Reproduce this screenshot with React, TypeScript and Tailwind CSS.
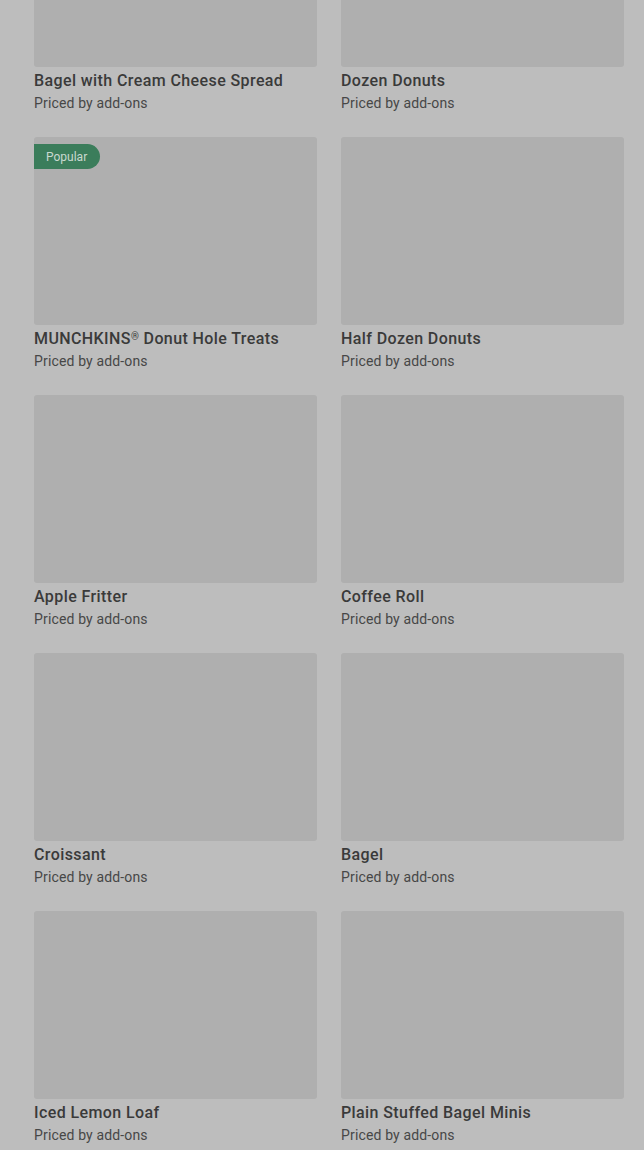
const items = [
  { name: "Bagel with Cream Cheese Spread" },
  { name: "Dozen Donuts" },
  { name: "MUNCHKINS® Donut Hole Treats", popular: true },
  { name: "Half Dozen Donuts" },
  { name: "Apple Fritter" },
  { name: "Coffee Roll" },
  { name: "Croissant" },
  { name: "Bagel" },
  { name: "Iced Lemon Loaf" },
  { name: "Plain Stuffed Bagel Minis" },
];

function Title({ name }: { name: string }) {
  // registered mark sits small and raised
  const parts = name.split("®");
  if (parts.length === 1) return <>{name}</>;
  return (
    <>
      {parts[0]}
      <span className="relative -top-[4px] align-baseline text-[10px] leading-none">®</span>
      {parts[1]}
    </>
  );
}

function ItemCard({ name, popular }: { name: string; popular?: boolean }) {
  return (
    <div className="flex flex-col">
      <div className="relative h-[188px] rounded-[3px] bg-[#afafaf]">
        {popular && (
          <span className="absolute left-0 top-[7px] flex h-[25px] items-center rounded-r-full bg-[#3b7d5b] pl-[12px] pr-[13px] text-[12px] text-[#c9d9d0]">
            Popular
          </span>
        )}
      </div>
      <div className="mt-[4px] h-[20px] text-[16px] font-medium leading-[20px] tracking-[0.4px] text-[#3a3a3a]">
        <Title name={name} />
      </div>
      <div className="mt-[2px] text-[14px] leading-[20px] tracking-[0.15px] text-[#474747]">Priced by add-ons</div>
    </div>
  );
}

export default function App() {
  return (
    <div
      className="h-[1150px] overflow-hidden bg-[#bdbdbd]"
      style={{ fontFamily: "Roboto, 'Noto Sans', sans-serif" }}
    >
      <div className="-mt-[121px] grid grid-cols-2 gap-x-[24px] gap-y-[24px] pl-[34px] pr-[20px]">
        {items.map((it) => (
          <ItemCard key={it.name} name={it.name} popular={it.popular} />
        ))}
      </div>
    </div>
  );
}
